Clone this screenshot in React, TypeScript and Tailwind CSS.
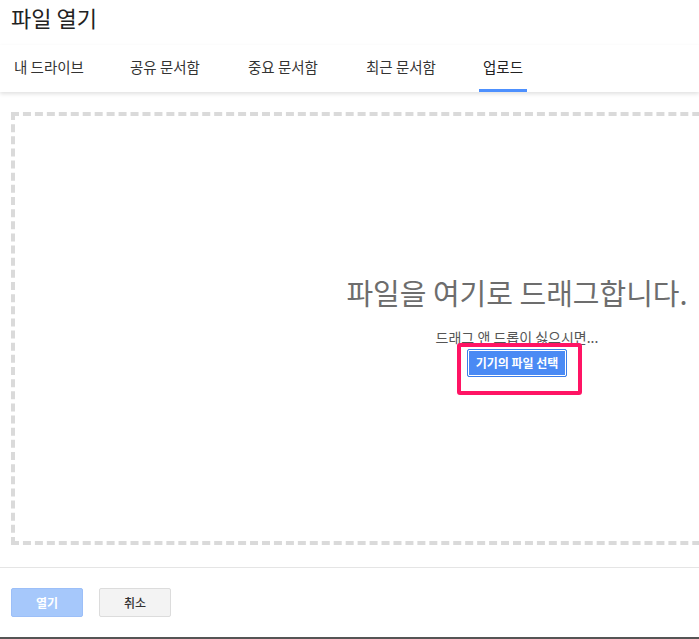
const FONT = "font-['Noto_Sans_CJK_KR','Noto_Sans',sans-serif]"

const tabs = [
  { label: "내 드라이브", w: "w-[116px]" },
  { label: "공유 문서함", w: "w-[118px]" },
  { label: "중요 문서함", w: "w-[118px]" },
  { label: "최근 문서함", w: "w-[117px]" },
  { label: "업로드", w: "w-auto" },
]
const ACTIVE = 4

export default function App() {
  return (
    <div className={`w-[699px] h-[639px] overflow-hidden bg-white flex flex-col ${FONT}`}>
      {/* Title */}
      <div className="h-[45px] pl-[11px] pt-[3px] text-[22px] leading-[28px] text-[#222]">파일 열기</div>

      {/* Tabs */}
      <div className="relative z-10 h-[47px] flex pl-[10px] shadow-[0_2px_4px_rgba(0,0,0,0.12)] bg-white">
        {tabs.map((t, i) => (
          <div key={t.label} className={`h-full shrink-0 ${t.w}`}>
            <div
              className={`inline-flex h-full px-[4px] items-center text-[14.5px] whitespace-nowrap border-b-[3px] ${
                i === ACTIVE ? "border-[#4d90fe] text-[#222]" : "border-transparent text-[#333]"
              }`}
            >
              {t.label}
            </div>
          </div>
        ))}
      </div>

      {/* Drop zone */}
      <div className="h-[475px] pl-[11px] pt-[20px]">
        <div className="w-[1012px] h-[433px] border-4 border-dashed border-[#dadada] flex flex-col items-center pt-[158px]">
          <div className="text-[29px] leading-[36px] text-[#6d6d6d]">파일을 여기로 드래그합니다.</div>
          <div className="mt-[19px] text-[14px] leading-[16px] text-[#555]">드래그 앤 드롭이 싫으시면...</div>
          <div className="relative mt-[4px] flex">
            <button className="w-[100px] h-[28px] rounded-[2px] bg-[#4a8af4] border border-[#3b7de9] shadow-[inset_0_0_0_1px_#fff] text-white text-[12px] font-bold">
              기기의 파일 선택
            </button>
            {/* highlight annotation */}
            <div className="absolute left-[-10px] top-[-6px] w-[125px] h-[52px] border-4 border-[#ff1464] rounded-[3px] pointer-events-none" />
          </div>
        </div>
      </div>

      {/* Footer */}
      <div className="h-[70px] border-t border-[#e5e5e5] pt-[20px] pl-[11px] flex gap-[16px] items-start">
        <button className="w-[72px] h-[29px] rounded-[2px] bg-[#a6c8fb] border border-[#9cbff8] text-white text-[12px] font-bold">
          열기
        </button>
        <button className="w-[72px] h-[29px] rounded-[2px] bg-[#f3f3f3] border border-[#dcdcdc] text-[#333] text-[12px] font-medium">
          취소
        </button>
      </div>
      <div className="h-[2px] bg-[#555]" />
    </div>
  )
}
